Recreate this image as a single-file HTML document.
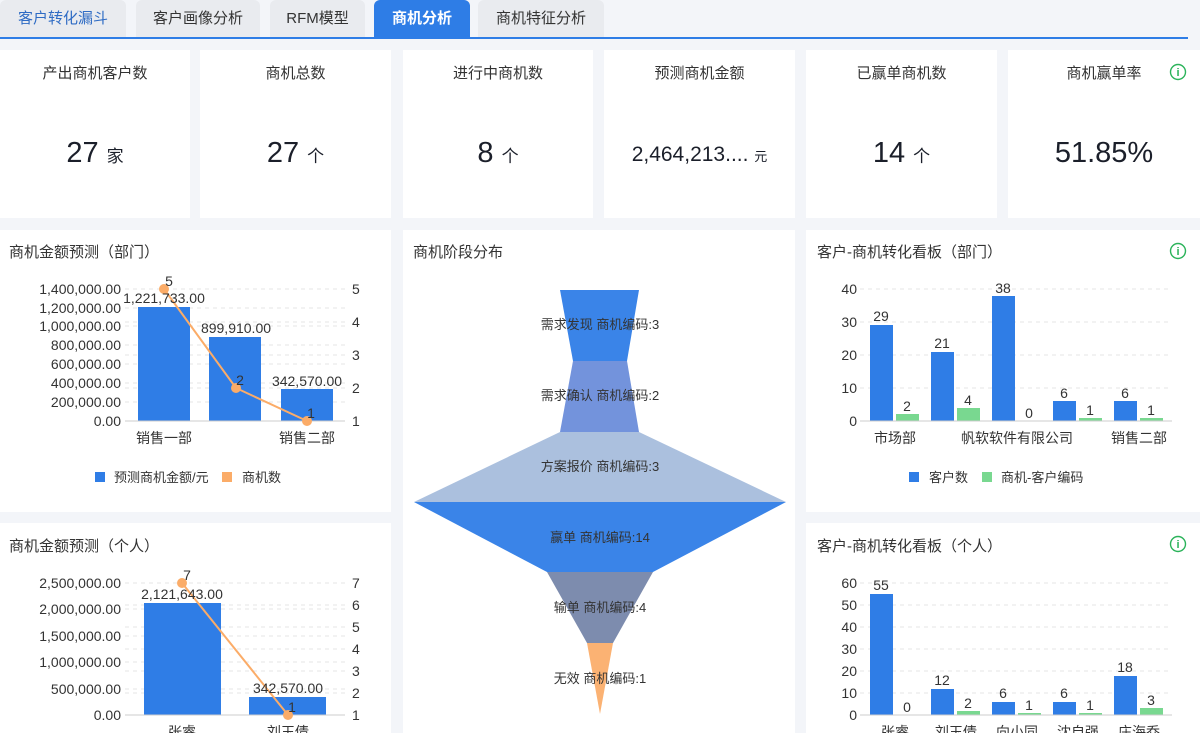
<!DOCTYPE html>
<html><head><meta charset="utf-8"><style>
*{margin:0;padding:0;box-sizing:border-box}
body{width:1200px;height:733px;overflow:hidden;background:#f3f5f9;font-family:"Liberation Sans","Noto Sans CJK SC",sans-serif;color:#333;position:relative}
.tab{position:absolute;top:0;height:37px;background:#e9ebef;border-radius:6px 6px 0 0;font-size:15px;line-height:38px;text-align:center;color:#333}
.tab.a{background:#2e7de6;color:#fff;font-weight:bold}
.line{position:absolute;left:0;top:37px;width:1188px;height:2px;background:#2e7de6}
.card{position:absolute;background:#fff}
.kt{position:absolute;top:12px;left:0;right:0;text-align:center;font-size:15px;color:#333}
.kv{position:absolute;top:87px;left:0;right:0;text-align:center;font-size:29px;color:#1b1f2a}
.kv small{font-size:17px}
svg{position:absolute;left:0;top:0}
</style></head><body>
<div class="tab" style="left:0;width:126px;color:#2e6bc4">客户转化漏斗</div>
<div class="tab" style="left:136px;width:124px">客户画像分析</div>
<div class="tab" style="left:270px;width:95px">RFM模型</div>
<div class="tab a" style="left:374px;width:96px">商机分析</div>
<div class="tab" style="left:478px;width:126px">商机特征分析</div>
<div class="line"></div>

<div class="card" style="left:0;top:50px;width:190px;height:168px"><div class="kt">产出商机客户数</div><div class="kv">27 <small>家</small></div></div>
<div class="card" style="left:200px;top:50px;width:191px;height:168px"><div class="kt">商机总数</div><div class="kv">27 <small>个</small></div></div>
<div class="card" style="left:403px;top:50px;width:190px;height:168px"><div class="kt">进行中商机数</div><div class="kv">8 <small>个</small></div></div>
<div class="card" style="left:604px;top:50px;width:191px;height:168px"><div class="kt">预测商机金额</div><div class="kv" style="font-size:21px;top:93px">2,464,213.... <small style="font-size:13px">元</small></div></div>
<div class="card" style="left:806px;top:50px;width:191px;height:168px"><div class="kt">已赢单商机数</div><div class="kv">14 <small>个</small></div></div>
<div class="card" style="left:1008px;top:50px;width:192px;height:168px"><div class="kt">商机赢单率</div><div class="kv">51.85%</div></div>

<div class="card" style="left:0;top:230px;width:391px;height:282px"></div>
<div class="card" style="left:403px;top:230px;width:392px;height:503px"></div>
<div class="card" style="left:806px;top:230px;width:394px;height:282px"></div>
<div class="card" style="left:0;top:523px;width:391px;height:210px"></div>
<div class="card" style="left:806px;top:523px;width:394px;height:210px"></div>

<svg width="1200" height="733" font-family="Liberation Sans, Noto Sans CJK SC, sans-serif" font-size="14" fill="#333">
<g fill="none" stroke="#2bb35a" stroke-width="1.4">
<circle cx="1178" cy="72" r="7.5"/><circle cx="1178" cy="251" r="7.5"/><circle cx="1178" cy="544" r="7.5"/>
</g>
<g fill="#2bb35a" font-size="11" font-weight="bold" text-anchor="middle"><text x="1178" y="76">i</text><text x="1178" y="255">i</text><text x="1178" y="548">i</text></g>
<g font-size="15" fill="#333"><text x="9" y="257">商机金额预测（部门）</text><text x="413" y="257">商机阶段分布</text><text x="817" y="257">客户-商机转化看板（部门）</text>
<text x="9" y="551">商机金额预测（个人）</text><text x="817" y="551">客户-商机转化看板（个人）</text></g>

<!-- chart1 -->
<g stroke="#e6e6e6" stroke-dasharray="4 4"><line x1="125" x2="345" y1="289" y2="289"/><line x1="125" x2="345" y1="308" y2="308"/><line x1="125" x2="345" y1="326" y2="326"/><line x1="125" x2="345" y1="345" y2="345"/><line x1="125" x2="345" y1="364" y2="364"/><line x1="125" x2="345" y1="383" y2="383"/><line x1="125" x2="345" y1="402" y2="402"/><line x1="125" x2="345" y1="322" y2="322"/><line x1="125" x2="345" y1="355" y2="355"/><line x1="125" x2="345" y1="388" y2="388"/></g>
<g fill="#2f7de6"><rect x="138" y="307" width="52" height="114"/><rect x="209" y="337" width="52" height="84"/><rect x="281" y="389" width="52" height="32"/></g>
<line x1="125" x2="345" y1="421" y2="421" stroke="#ccc"/>
<g text-anchor="end" font-size="14"><text x="121" y="294">1,400,000.00</text><text x="121" y="313">1,200,000.00</text><text x="121" y="331">1,000,000.00</text><text x="121" y="350">800,000.00</text><text x="121" y="369">600,000.00</text><text x="121" y="388">400,000.00</text><text x="121" y="407">200,000.00</text><text x="121" y="426">0.00</text></g>
<g font-size="14"><text x="352" y="294">5</text><text x="352" y="327">4</text><text x="352" y="360">3</text><text x="352" y="393">2</text><text x="352" y="426">1</text></g>
<polyline points="164,289 236,388 307,421" fill="none" stroke="#fbac68" stroke-width="2"/>
<g fill="#fbac68"><circle cx="164" cy="289" r="5"/><circle cx="236" cy="388" r="5"/><circle cx="307" cy="421" r="5"/></g>
<g text-anchor="middle"><text x="164" y="303">1,221,733.00</text><text x="236" y="333">899,910.00</text><text x="307" y="386">342,570.00</text><text x="169" y="286">5</text><text x="240" y="385">2</text><text x="311" y="418">1</text>
<text x="164" y="443">销售一部</text><text x="307" y="443">销售二部</text></g>
<rect x="95" y="472" width="10" height="10" fill="#2f7de6"/><text x="114" y="482" font-size="13">预测商机金额/元</text>
<rect x="222" y="472" width="10" height="10" fill="#fbac68"/><text x="242" y="482" font-size="13">商机数</text>

<!-- chart2 -->
<g stroke="#e6e6e6" stroke-dasharray="4 4"><line x1="125" x2="345" y1="583" y2="583"/><line x1="125" x2="345" y1="609" y2="609"/><line x1="125" x2="345" y1="636" y2="636"/><line x1="125" x2="345" y1="662" y2="662"/><line x1="125" x2="345" y1="689" y2="689"/><line x1="125" x2="345" y1="605" y2="605"/><line x1="125" x2="345" y1="627" y2="627"/><line x1="125" x2="345" y1="649" y2="649"/><line x1="125" x2="345" y1="671" y2="671"/><line x1="125" x2="345" y1="693" y2="693"/></g>
<g fill="#2f7de6"><rect x="144" y="603" width="77" height="112"/><rect x="249" y="697" width="77" height="18"/></g>
<line x1="125" x2="345" y1="715" y2="715" stroke="#ccc"/>
<g text-anchor="end"><text x="121" y="588">2,500,000.00</text><text x="121" y="614">2,000,000.00</text><text x="121" y="641">1,500,000.00</text><text x="121" y="667">1,000,000.00</text><text x="121" y="694">500,000.00</text><text x="121" y="720">0.00</text></g>
<g><text x="352" y="588">7</text><text x="352" y="610">6</text><text x="352" y="632">5</text><text x="352" y="654">4</text><text x="352" y="676">3</text><text x="352" y="698">2</text><text x="352" y="720">1</text></g>
<polyline points="182,583 288,715" fill="none" stroke="#fbac68" stroke-width="2"/>
<g fill="#fbac68"><circle cx="182" cy="583" r="5"/><circle cx="288" cy="715" r="5"/></g>
<g text-anchor="middle"><text x="182" y="599">2,121,643.00</text><text x="288" y="693">342,570.00</text><text x="187" y="580">7</text><text x="292" y="712">1</text><text x="182" y="737">张睿</text><text x="288" y="737">刘玉倩</text></g>

<!-- funnel -->
<polygon points="560,290 639,290 627,361 573,361" fill="#3a84e8"/>
<polygon points="573,361 627,361 639,432 560,432" fill="#7393dc"/>
<polygon points="560,432 639,432 786,502 414,502" fill="#abc0de"/>
<polygon points="414,502 786,502 653,572 547,572" fill="#3a84e8"/>
<polygon points="547,572 653,572 613,643 587,643" fill="#7d8cae"/>
<polygon points="587,643 613,643 600,714" fill="#fbb273"/>
<g text-anchor="middle" font-size="13" fill="#333"><text x="600" y="329">需求发现 商机编码:3</text><text x="600" y="400">需求确认 商机编码:2</text><text x="600" y="471">方案报价 商机编码:3</text><text x="600" y="542">赢单 商机编码:14</text><text x="600" y="612">输单 商机编码:4</text><text x="600" y="683">无效 商机编码:1</text></g>

<!-- chart3 -->
<g stroke="#e6e6e6" stroke-dasharray="4 4"><line x1="860" x2="1172" y1="289" y2="289"/><line x1="860" x2="1172" y1="322" y2="322"/><line x1="860" x2="1172" y1="355" y2="355"/><line x1="860" x2="1172" y1="388" y2="388"/></g>
<g fill="#2f7de6"><rect x="870" y="325" width="23" height="96"/><rect x="931" y="352" width="23" height="69"/><rect x="992" y="296" width="23" height="125"/><rect x="1053" y="401" width="23" height="20"/><rect x="1114" y="401" width="23" height="20"/></g>
<g fill="#79d890"><rect x="896" y="414" width="23" height="7"/><rect x="957" y="408" width="23" height="13"/><rect x="1079" y="418" width="23" height="3"/><rect x="1140" y="418" width="23" height="3"/></g>
<line x1="860" x2="1172" y1="421" y2="421" stroke="#ccc"/>
<g text-anchor="end"><text x="857" y="294">40</text><text x="857" y="327">30</text><text x="857" y="360">20</text><text x="857" y="393">10</text><text x="857" y="426">0</text></g>
<g text-anchor="middle"><text x="881" y="321">29</text><text x="907" y="411">2</text><text x="942" y="348">21</text><text x="968" y="405">4</text><text x="1003" y="293">38</text><text x="1029" y="418">0</text><text x="1064" y="398">6</text><text x="1090" y="415">1</text><text x="1125" y="398">6</text><text x="1151" y="415">1</text>
<text x="895" y="443">市场部</text><text x="1017" y="443">帆软软件有限公司</text><text x="1139" y="443">销售二部</text></g>
<rect x="909" y="472" width="10" height="10" fill="#2f7de6"/><text x="929" y="482" font-size="13">客户数</text>
<rect x="982" y="472" width="10" height="10" fill="#79d890"/><text x="1001" y="482" font-size="13">商机-客户编码</text>

<!-- chart4 -->
<g stroke="#e6e6e6" stroke-dasharray="4 4"><line x1="860" x2="1172" y1="583" y2="583"/><line x1="860" x2="1172" y1="605" y2="605"/><line x1="860" x2="1172" y1="627" y2="627"/><line x1="860" x2="1172" y1="649" y2="649"/><line x1="860" x2="1172" y1="671" y2="671"/><line x1="860" x2="1172" y1="693" y2="693"/></g>
<g fill="#2f7de6"><rect x="870" y="594" width="23" height="121"/><rect x="931" y="689" width="23" height="26"/><rect x="992" y="702" width="23" height="13"/><rect x="1053" y="702" width="23" height="13"/><rect x="1114" y="676" width="23" height="39"/></g>
<g fill="#79d890"><rect x="957" y="711" width="23" height="4"/><rect x="1018" y="713" width="23" height="2"/><rect x="1079" y="713" width="23" height="2"/><rect x="1140" y="708" width="23" height="7"/></g>
<line x1="860" x2="1172" y1="715" y2="715" stroke="#ccc"/>
<g text-anchor="end"><text x="857" y="588">60</text><text x="857" y="610">50</text><text x="857" y="632">40</text><text x="857" y="654">30</text><text x="857" y="676">20</text><text x="857" y="698">10</text><text x="857" y="720">0</text></g>
<g text-anchor="middle"><text x="881" y="590">55</text><text x="907" y="712">0</text><text x="942" y="685">12</text><text x="968" y="708">2</text><text x="1003" y="698">6</text><text x="1029" y="710">1</text><text x="1064" y="698">6</text><text x="1090" y="710">1</text><text x="1125" y="672">18</text><text x="1151" y="705">3</text>
<text x="895" y="737">张睿</text><text x="956" y="737">刘玉倩</text><text x="1017" y="737">向小同</text><text x="1078" y="737">沈自强</text><text x="1139" y="737">庄海乔</text></g>
</svg>
</body></html>
